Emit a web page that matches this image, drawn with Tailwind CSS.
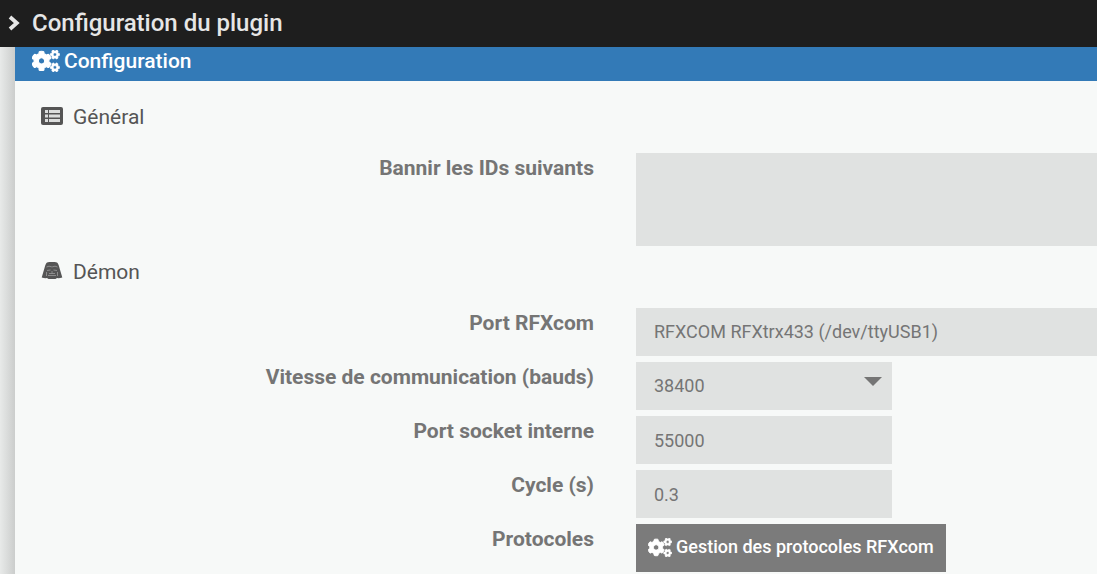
<!DOCTYPE html>
<html lang="fr">
<head>
<meta charset="utf-8">
<meta name="viewport" content="width=device-width, initial-scale=1">
<title>Configuration du plugin</title>
<script src="https://cdn.jsdelivr.net/npm/@tailwindcss/browser@4"></script>
</head>
<body class="min-h-screen flex flex-col bg-[#f7f9f8] font-[Roboto,sans-serif] text-[#757575]">
<svg class="hidden" aria-hidden="true">
  <defs>
    <path id="small-cog" fill="currentColor" stroke="currentColor" stroke-width="10" d="M512.1 191l-8.2 14.3c-3 5.3-9.4 7.5-15.1 5.4-11.8-4.4-22.6-10.7-32.1-18.6-4.6-3.8-5.8-10.5-2.8-15.7l8.2-14.3c-6.9-8-12.3-17.3-15.9-27.4h-16.5c-6 0-11.2-4.3-12.2-10.3-2-12-2.1-24.6 0-37.1 1-6 6.2-10.4 12.2-10.4h16.5c3.6-10.1 9-19.4 15.9-27.4l-8.2-14.3c-3-5.2-1.9-11.9 2.8-15.7 9.5-7.9 20.4-14.2 32.1-18.6 5.7-2.1 12.1.1 15.1 5.4l8.2 14.3c10.5-1.9 21.2-1.9 31.7 0L552 6.3c3-5.3 9.4-7.5 15.1-5.4 11.8 4.4 22.6 10.7 32.1 18.6 4.6 3.8 5.8 10.5 2.8 15.7l-8.2 14.3c6.9 8 12.3 17.3 15.9 27.4h16.5c6 0 11.2 4.3 12.2 10.3 2 12 2.1 24.6 0 37.1-1 6-6.2 10.4-12.2 10.4h-16.5c-3.6 10.1-9 19.4-15.9 27.4l8.2 14.3c3 5.2 1.9 11.9-2.8 15.7-9.5 7.9-20.4 14.2-32.1 18.6-5.7 2.1-12.1-.1-15.1-5.4l-8.2-14.3c-10.4 1.9-21.2 1.9-31.7 0zm-10.5-58.8c38.5 29.6 82.4-14.3 52.8-52.8-38.5-29.7-82.4 14.3-52.8 52.8z"/>
  </defs>
  <symbol id="cogs" viewBox="0 0 640 512">
    <use href="#small-cog"/>
    <use href="#small-cog" transform="translate(0 299)"/>
    <path fill="currentColor" stroke="currentColor" stroke-width="26" d="M386.3 286.1l33.7 16.8c10.1 5.8 14.5 18.1 10.5 29.1-8.9 24.2-26.4 46.4-42.6 65.8-7.4 8.9-20.2 11.1-30.3 5.3l-29.1-16.8c-16 13.7-34.6 24.6-54.9 31.7v33.6c0 11.6-8.3 21.6-19.7 23.6-24.6 4.2-50.4 4.4-75.9 0-11.5-2-20-11.9-20-23.6V418c-20.3-7.2-38.9-18-54.9-31.7L74 403c-10 5.8-22.9 3.6-30.3-5.3-16.2-19.4-33.3-41.6-42.2-65.7-4-10.9.4-23.2 10.5-29.1l33.3-16.8c-3.9-20.9-3.9-42.4 0-63.4L12 205.8c-10.1-5.8-14.6-18.1-10.5-29 8.9-24.2 26-46.4 42.2-65.8 7.4-8.9 20.2-11.1 30.3-5.3l29.1 16.8c16-13.7 34.6-24.6 54.9-31.7V57.1c0-11.5 8.2-21.5 19.6-23.5 24.6-4.2 50.5-4.4 76-.1 11.5 2 20 11.9 20 23.6v33.6c20.3 7.2 38.9 18 54.9 31.7l29.1-16.8c10-5.8 22.9-3.6 30.3 5.3 16.2 19.4 33.2 41.6 42.1 65.8 4 10.9.1 23.2-10 29.1l-33.7 16.8c3.9 21 3.9 42.5 0 63.5zm-117.6 21.1c59.2-77-28.7-164.9-105.7-105.7-59.2 77 28.7 164.9 105.7 105.7z"/>
  </symbol>
</svg>

<header class="flex h-[47px] shrink-0 items-center gap-3 bg-[#1e1e1e] pb-[2px] pl-2 text-[#e6e6e6]">
  <svg class="h-4 w-3" viewBox="0 0 12 16" fill="none" stroke="currentColor" stroke-width="3.8" aria-hidden="true"><path d="M2 2L8.8 8L2 14"/></svg>
  <h1 class="text-2xl font-medium">Configuration du plugin</h1>
</header>

<div class="flex grow">
  <div class="w-[15px] shrink-0 bg-linear-to-r from-[#e8eae9] to-[#cbcdcc]"></div>
  <main class="min-w-0 grow">
    <h2 class="flex h-[34px] items-center gap-1 bg-[#337ab7] pb-[6px] pl-[17px] text-[21px] leading-[30px] font-medium text-white">
      <svg class="h-[22px] w-7" aria-hidden="true"><use href="#cogs"/></svg>
      Configuration
    </h2>
    <form class="pt-[18px]">
      <fieldset>
        <legend class="mb-[18px] flex h-9 items-center gap-[10px] pl-[26px] text-[21px] leading-[30px] text-[#555]">
          <svg class="h-[20px] w-[22px]" viewBox="0 0 22 20" aria-hidden="true"><rect width="22" height="18" rx="2" fill="#555"/><path d="M4 3h3v3H4zM8 3h11v3H8zM4 7.500h3v3H4zM8 7.500h11v3H8zM4 12h3v3H4zM8 12h11v3H8z" fill="#dcdedd"/></svg>
          Général
        </legend>
        <div class="grid grid-cols-[minmax(0,579fr)_minmax(0,461fr)] gap-x-[42px]">
          <label for="ban" class="text-right text-[21px] leading-[30px] font-bold">Bannir les IDs suivants</label>
          <textarea id="ban" class="block h-[93px] w-full resize-none bg-[#e0e2e1] px-[18px] py-3 text-lg outline-none"></textarea>
        </div>
      </fieldset>
      <fieldset class="pt-2">
        <legend class="contents"><span class="mb-[18px] flex h-9 items-center gap-[10px] pl-[26px] text-[21px] leading-[30px] text-[#555]">
          <svg class="h-[20px] w-[22px]" viewBox="0 0 22 20" aria-hidden="true"><path d="M6 .5Q11-1 16 .5Q17.500 1.500 18.500 6L21.300 15.500Q18 16.500 16 16L14.500 17H7.500L6 16Q4 16.500.7 15.500L3.500 6Q4.500 1.500 6 .5Z" fill="#555"/><path d="M5.500 5Q8 3.500 10.500 4.800H11.500Q14 3.500 16.500 5M6 8.500L9.500 8M12.500 8L16 8.500M11 9V11.500M8 11.500H14M7 13.500H15M5.500 10V14M16.500 10V14" fill="none" stroke="#9a9b9b" stroke-width="0.8"/></svg>
          Démon
        </span></legend>
        <div class="grid grid-cols-[minmax(0,579fr)_minmax(0,461fr)] gap-x-[42px] gap-y-[6px]">
          <label for="port" class="text-right text-[21px] leading-[30px] font-bold">Port RFXcom</label>
          <select id="port" class="h-12 w-full appearance-none bg-[#e0e2e1] px-[18px] text-lg outline-none"><option>RFXCOM RFXtrx433 (/dev/ttyUSB1)</option></select>

          <label for="baud" class="text-right text-[21px] leading-[30px] font-bold">Vitesse de communication (bauds)</label>
          <div class="relative w-64">
            <select id="baud" class="block h-12 w-full appearance-none bg-[#e0e2e1] px-[18px] text-lg outline-none"><option>38400</option></select>
            <svg class="pointer-events-none absolute top-[15px] right-[10px] h-[9px] w-[18px]" viewBox="0 0 18 9" aria-hidden="true"><path d="M0 0H18L9 9Z" fill="#757575"/></svg>
          </div>

          <label for="socket" class="text-right text-[21px] leading-[30px] font-bold">Port socket interne</label>
          <input id="socket" type="text" value="55000" class="h-12 w-64 bg-[#e0e2e1] px-[18px] text-lg outline-none">

          <label for="cycle" class="text-right text-[21px] leading-[30px] font-bold">Cycle (s)</label>
          <input id="cycle" type="text" value="0.3" class="h-12 w-64 bg-[#e0e2e1] px-[18px] text-lg outline-none">

          <label for="protocols" class="text-right text-[21px] leading-[30px] font-bold">Protocoles</label>
          <button id="protocols" type="button" class="flex h-12 items-center gap-1 justify-self-start bg-[#7b7b7b] px-3 pb-[2px] text-lg font-medium whitespace-nowrap text-white">
            <svg class="h-[19px] w-6" aria-hidden="true"><use href="#cogs"/></svg>
            Gestion des protocoles RFXcom
          </button>
        </div>
      </fieldset>
    </form>
  </main>
</div>
</body>
</html>
